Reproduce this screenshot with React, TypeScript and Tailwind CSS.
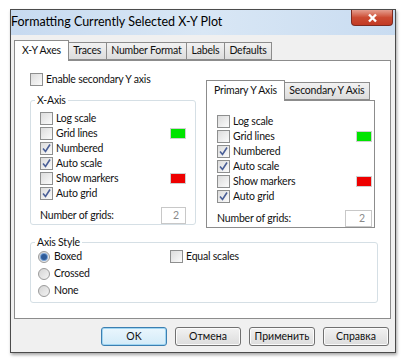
import React from 'react';

const font = { fontFamily: 'Lato, "Noto Sans", sans-serif' };

function Check({ checked = false }: { checked?: boolean }) {
    return (
        <span className="relative flex h-[13px] w-[13px] flex-shrink-0 items-center justify-center border border-[#8e8f8f] bg-gradient-to-br from-[#dcdcdc] to-[#fbfbfb]">
            {checked && (
                <svg width="11" height="11" viewBox="0 0 11 11" className="absolute">
                    <path d="M2 5.5 L4.5 8.5 L9 1.5" fill="none" stroke="#4a5f97" strokeWidth="1.6" />
                </svg>
            )}
        </span>
    );
}

function Radio({ checked = false }: { checked?: boolean }) {
    return (
        <span className="flex h-[12px] w-[12px] flex-shrink-0 items-center justify-center rounded-full border border-[#9a9a9a] bg-gradient-to-br from-[#d4d4d4] to-[#f4f4f4]">
            {checked && <span className="h-[6px] w-[6px] rounded-full bg-[#2f5c99] ring-1 ring-[#7ba4d6]" />}
        </span>
    );
}

function CheckRow({ label, checked, swatch }: { label: string; checked?: boolean; swatch?: string }) {
    return (
        <div className="flex h-[15px] items-center">
            <Check checked={checked} />
            <span className="ml-[3px] whitespace-nowrap text-[10.5px] leading-none tracking-[-0.2px] text-[#111]">{label}</span>
            {swatch && <span className={`ml-auto h-[11px] w-[16px] border border-[#d0d0d0] ${swatch}`} />}
        </div>
    );
}

function AxisOptions({ inputW }: { inputW: string }) {
    return (
        <div className="flex flex-col">
            <CheckRow label="Log scale" />
            <CheckRow label="Grid lines" swatch="bg-[#00e400]" />
            <CheckRow label="Numbered" checked />
            <CheckRow label="Auto scale" checked />
            <CheckRow label="Show markers" swatch="bg-[#ee0000]" />
            <CheckRow label="Auto grid" checked />
            <div className="mt-[6px] flex items-center justify-between">
                <span className="whitespace-nowrap text-[10.5px] tracking-[-0.2px] text-[#111]">Number of grids:</span>
                <span className={`flex h-[17px] ${inputW} items-center justify-end border border-[#c8c8c8] bg-white pr-[6px] text-[10.5px] text-[#8a8a8a]`}>
                    2
                </span>
            </div>
        </div>
    );
}

function Tab({ label, active }: { label: string; active?: boolean }) {
    return active ? (
        <div className="relative z-10 -mb-px flex h-[21px] items-center whitespace-nowrap border border-b-0 border-[#8c8c8c] bg-white px-[7px] text-[10.5px] tracking-[-0.2px] text-[#111]">
            {label}
        </div>
    ) : (
        <div className="-ml-px flex h-[18px] items-center whitespace-nowrap border border-[#8c8c8c] bg-gradient-to-b from-[#f2f2f2] to-[#dcdcdc] px-[4.5px] text-[10.5px] tracking-[-0.2px] text-[#111]">
            {label}
        </div>
    );
}

function Button({ label, primary }: { label: string; primary?: boolean }) {
    return (
        <div
            className={`flex h-[19px] w-[66px] items-center justify-center rounded-[3px] border text-[10.5px] text-[#111] ${
                primary
                    ? 'border-[#3c7fb1] bg-gradient-to-b from-[#eaf6fd] to-[#d3ebf8] shadow-[inset_0_0_0_1px_#9fd5f2]'
                    : 'border-[#707070] bg-gradient-to-b from-[#f2f2f2] to-[#dcdcdc] shadow-[inset_0_0_0_1px_#fbfbfb]'
            }`}
        >
            {label}
        </div>
    );
}

export default function App() {
    return (
        <div className="h-[362px] w-[406px] bg-white pl-[10px] pt-[9px]" style={font}>
            <div className="flex h-[344px] w-[386px] flex-col border border-[#4b4b4b] bg-[#f0f0f0] shadow-[1px_2px_3px_rgba(0,0,0,0.35)]">
                {/* title bar */}
                <div className="flex h-[25px] items-start justify-between bg-gradient-to-r from-[#c7daf0] via-[#d9e7f5] to-[#c9dcf1] pr-[2px]">
                    <span className="pt-[4px] text-[12.5px] leading-[15px] text-black">Formatting Currently Selected X-Y Plot</span>
                    <div className="flex h-[16px] w-[42px] items-center justify-center rounded-b-[4px] border border-t-0 border-[#7d2a20] bg-gradient-to-b from-[#e49d8f] via-[#cc4b33] to-[#c23a24]">
                        <svg width="11" height="10" viewBox="0 0 11 10">
                            <path d="M2 1.5 L9 8.5 M9 1.5 L2 8.5" stroke="#fff" strokeWidth="2.4" />
                        </svg>
                    </div>
                </div>

                {/* body */}
                <div className="flex flex-1 flex-col px-[3px] pt-[5px]">
                    <div className="flex items-end">
                        <Tab label="X-Y Axes" active />
                        <Tab label="Traces" />
                        <Tab label="Number Format" />
                        <Tab label="Labels" />
                        <Tab label="Defaults" />
                    </div>
                    <div className="mr-[1px] flex h-[259px] flex-col border border-[#8c8c8c] bg-white px-[15px] pt-[12px]">
                        <div className="flex items-center">
                            <Check />
                            <span className="ml-[3px] text-[10.5px] leading-none tracking-[-0.2px] text-[#111]">Enable secondary Y axis</span>
                        </div>

                        <div className="mt-[14px] flex gap-[10px]">
                            {/* X-Axis */}
                            <div className="relative h-[125px] w-[167px] rounded-[3px] border border-[#d5dfe5] px-[9px] pt-[10px]">
                                <span className="absolute -top-[8px] left-[4px] bg-white px-[2px] text-[10.5px] tracking-[-0.2px] text-[#111]">X-Axis</span>
                                <AxisOptions inputW="w-[25px]" />
                            </div>

                            {/* Y-Axis tabs */}
                            <div className="-mt-[20px] flex w-[170px] flex-col">
                                <div className="flex items-end">
                                    <Tab label="Primary Y Axis" active />
                                    <Tab label="Secondary Y Axis" />
                                </div>
                                <div className="flex h-[128px] flex-col border border-[#8c8c8c] bg-white pl-[10px] pr-[2px] pt-[13px]">
                                    <AxisOptions inputW="w-[27px]" />
                                </div>
                            </div>
                        </div>

                        {/* Axis style */}
                        <div className="relative mt-[14px] flex h-[61px] w-[348px] rounded-[3px] border border-[#d5dfe5] pl-[7px] pt-[7px]">
                            <span className="absolute -top-[8px] left-[4px] bg-white px-[2px] text-[10.5px] tracking-[-0.2px] text-[#111]">Axis Style</span>
                            <div className="flex w-[132px] flex-col gap-[4px]">
                                <div className="flex h-[13px] items-center gap-[4px]">
                                    <Radio checked />
                                    <span className="text-[10.5px] tracking-[-0.2px] text-[#111]">Boxed</span>
                                </div>
                                <div className="flex h-[13px] items-center gap-[4px]">
                                    <Radio />
                                    <span className="text-[10.5px] tracking-[-0.2px] text-[#111]">Crossed</span>
                                </div>
                                <div className="flex h-[13px] items-center gap-[4px]">
                                    <Radio />
                                    <span className="text-[10.5px] tracking-[-0.2px] text-[#111]">None</span>
                                </div>
                            </div>
                            <div className="flex h-[13px] items-center">
                                <Check />
                                <span className="ml-[3px] text-[10.5px] leading-none tracking-[-0.2px] text-[#111]">Equal scales</span>
                            </div>
                        </div>
                    </div>

                    <div className="mt-[8px] flex justify-end gap-[8px] pr-[3px]">
                        <Button label="OK" primary />
                        <Button label="Отмена" />
                        <Button label="Применить" />
                        <Button label="Справка" />
                    </div>
                </div>
            </div>
        </div>
    );
}
